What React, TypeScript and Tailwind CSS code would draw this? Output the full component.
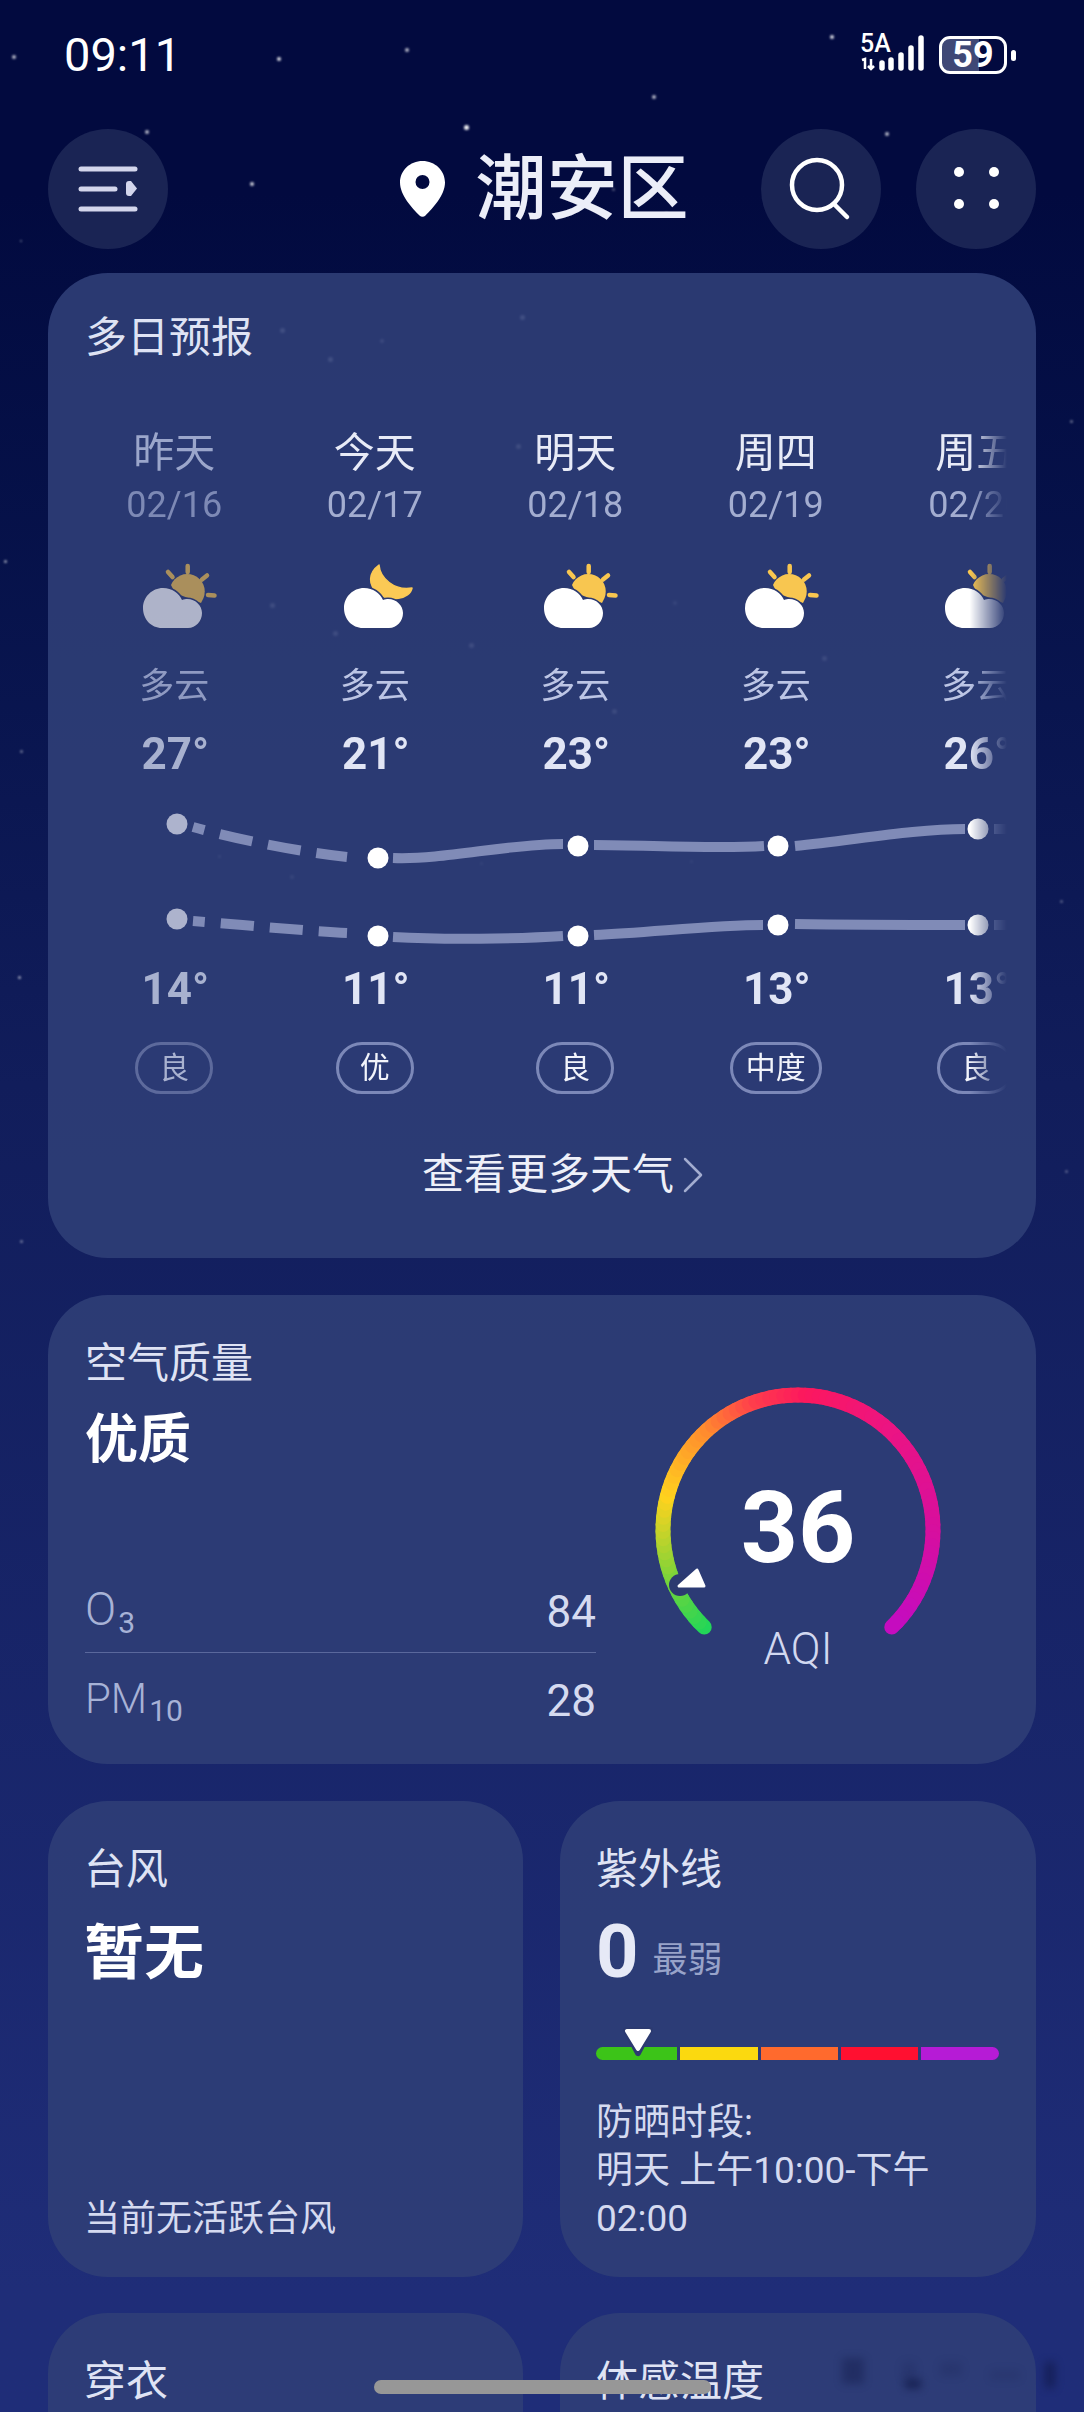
import React from "react";

const FONT = "font-['Roboto','Noto_Sans_CJK_SC',sans-serif]";
const CARD = "bg-[#2f3e77]/[0.9] rounded-[60px]";

const days = [
  { d: "昨天", date: "02/16", icon: "sun", w: "多云", hi: "27", lo: "14", aq: "良", dim: true },
  { d: "今天", date: "02/17", icon: "moon", w: "多云", hi: "21", lo: "11", aq: "优", dim: false },
  { d: "明天", date: "02/18", icon: "sun", w: "多云", hi: "23", lo: "11", aq: "良", dim: false },
  { d: "周四", date: "02/19", icon: "sun", w: "多云", hi: "23", lo: "13", aq: "中度", dim: false },
  { d: "周五", date: "02/20", icon: "sun", w: "多云", hi: "26", lo: "13", aq: "良", dim: false },
];

const stars: [number, number, number, number][] = [
  [12, 55, 4, 0.7], [277, 57, 4, 0.85], [405, 48, 3.5, 0.7], [830, 35, 4, 0.85], [652, 95, 3.5, 0.7],
  [145, 130, 4, 0.7], [464, 125, 4.5, 0.95], [885, 132, 3.5, 0.7], [970, 148, 4, 0.6], [250, 182, 4, 0.8],
  [665, 212, 3, 0.4], [612, 188, 2.5, 0.3], [880, 60, 2, 0.3], [20, 240, 2, 0.4],
  [280, 328, 5, 0.9], [380, 339, 4, 0.7], [328, 357, 5, 0.9], [520, 315, 5, 0.9], [516, 444, 5, 0.8],
  [270, 603, 5, 0.8], [333, 631, 5, 0.8], [469, 643, 5, 0.8], [673, 601, 4, 0.5], [822, 656, 5, 0.7],
  [612, 709, 5, 0.7], [218, 855, 3, 0.5], [290, 875, 4, 0.5], [480, 862, 3, 0.4], [690, 860, 3, 0.4],
  [4, 560, 3, 0.6], [18, 976, 3, 0.6], [20, 750, 2.5, 0.4], [1070, 420, 2.5, 0.4], [1060, 900, 2.5, 0.3],
  [20, 1240, 2.5, 0.4], [1065, 1170, 2.5, 0.3],
];

const smudges: [number, number, number, number, number][] = [
  [842, 2358, 22, 26, 0.35], [902, 2362, 14, 18, 0.15], [905, 2380, 16, 8, 0.75], [940, 2362, 22, 14, 0.15],
  [990, 2370, 30, 10, 0.12], [1045, 2362, 10, 26, 0.55],
];

function WeatherIcon({ kind, dim }: { kind: string; dim: boolean }) {
  return (
    <svg width="80" height="70" viewBox="0 0 80 70" className={dim ? "opacity-[0.62]" : ""}>
      {kind === "sun" ? (
        <g>
          <path d="M28 22 A17 17 0 0 1 60.5 35 L58 40 L32 30 Z" fill="#f8c650" />
          <g stroke="#f8c650" strokeWidth="4.5" strokeLinecap="round" fill="none">
            <path d="M44.7 3 L44.7 9" />
            <path d="M25 9 L29.5 14" />
            <path d="M64 12.5 L59 16.5" />
            <path d="M65 32 L71.5 32.5" />
          </g>
        </g>
      ) : (
        <path d="M35 2 C36 15 50 28 68 25 C66 36 45 40 34 30 C24 22 24 10 35 2 Z" fill="#fbc955" stroke="#fbc955" strokeWidth="1.5" strokeLinejoin="round" />
      )}
      <path
        d="M19 65 C8 65 0 56 0 45 C0 34 9 25 20 25 C29 25 36 30 39 37 C41 36 43 36 44 36 C53 36 59 43 59 50 C59 58 53 65 45 65 Z"
        fill="#ffffff"
        stroke="#2c3a70"
        strokeWidth="3"
        paintOrder="stroke"
      />
    </svg>
  );
}

function TempChart() {
  const hi: [number, number][] = [[102, 28], [303, 62], [503, 50], [703, 50], [903, 33]];
  const lo: [number, number][] = [[102, 123], [303, 140], [503, 140], [703, 129], [903, 129]];
  return (
    <svg width="932" height="160" viewBox="0 0 932 160" className="block">
      <g fill="none" stroke="#808bb7" strokeWidth="10">
        <path d="M118 31 C160 43 225 56 272 61" strokeDasharray="12 16 33 16 33 16 33" />
        <path d="M318 62 C370 64 430 48 488 48" />
        <path d="M519 49 C570 49 640 53 689 50" />
        <path d="M720 50 C780 44 840 33 890 33" />
        <path d="M919 33 L932 33" />
        <path d="M118 125 C170 129 230 135 272 137" strokeDasharray="12 16 33 16 33 16 33" />
        <path d="M318 141 C370 144 440 143 488 140" />
        <path d="M519 139 C580 136 640 129 688 129" />
        <path d="M720 128 C780 129 840 129 890 129" />
        <path d="M919 129 L932 129" />
      </g>
      {[...hi, ...lo].map(([x, y], i) => (
        <circle key={i} cx={x} cy={y} r="10.5" fill={i % 5 === 0 ? "#adb3cd" : "#ffffff"} />
      ))}
    </svg>
  );
}

const gaugeStops: [number, [number, number, number]][] = [
  [0, [30, 214, 90]],
  [0.09, [110, 212, 60]],
  [0.23, [255, 210, 30]],
  [0.35, [255, 140, 46]],
  [0.44, [255, 60, 76]],
  [0.52, [252, 24, 94]],
  [0.66, [236, 20, 130]],
  [0.83, [216, 15, 156]],
  [1, [196, 12, 192]],
];

function gaugeColor(t: number) {
  for (let i = 0; i < gaugeStops.length - 1; i++) {
    const [a, ca] = gaugeStops[i];
    const [b, cb] = gaugeStops[i + 1];
    if (t <= b) {
      const k = (t - a) / (b - a);
      return `rgb(${ca.map((c, j) => Math.round(c + (cb[j] - c) * k)).join(",")})`;
    }
  }
  return "rgb(196,12,192)";
}

function Gauge() {
  const cx = 150;
  const cy = 150;
  const r = 135;
  const n = 90;
  const pt = (t: number) => {
    const th = ((-136 + 272 * t) * Math.PI) / 180;
    return [cx + r * Math.sin(th), cy - r * Math.cos(th)];
  };
  return (
    <svg width="300" height="300" viewBox="0 0 300 300" className="block">
      <g fill="none" strokeWidth="15" strokeLinecap="round">
        {Array.from({ length: n }).map((_, i) => {
          const a = pt(i / n);
          const b = pt((i + 1) / n);
          return (
            <path key={i} d={`M${a[0]} ${a[1]} L${b[0]} ${b[1]}`} stroke={gaugeColor((i + 0.5) / n)} />
          );
        })}
      </g>
      <circle cx="32" cy="205" r="11" fill="#2c3a70" />
      <path d="M49 190 L31 206 L56 206 Z" fill="#ffffff" stroke="#ffffff" strokeWidth="3" strokeLinejoin="round" />
    </svg>
  );
}

function Sub({ children }: { children: React.ReactNode }) {
  return <span className="text-[30px] font-normal relative top-[8px] ml-[2px]">{children}</span>;
}

export default function App() {
  return (
    <div className={`${FONT} relative w-[1084px] h-[2412px] overflow-hidden bg-gradient-to-b from-[#020a3f] from-[8%] via-[#111d5b] via-[45%] to-[#1f2d78] to-[95%] text-white`}>
      {/* stars */}
      {stars.map(([x, y, s, o], i) => (
        <div
          key={i}
          className="absolute rounded-full bg-white blur-[1px]"
          style={{ left: x, top: y, width: s, height: s, opacity: o }}
        />
      ))}

      <div className="relative flex flex-col px-[48px]">
        {/* status bar */}
        <div className="h-[110px] flex items-center justify-between pl-[16px] pr-[20px]">
          <span className="text-[47px] leading-[50px] text-white">09:11</span>
          <div className="flex items-center gap-[12px]">
            <div className="relative w-[70px] h-[40px]">
              <span className="absolute left-[3px] top-[-4px] text-[25px] leading-[26px] font-medium text-white">5A</span>
              <svg width="70" height="40" viewBox="0 0 70 40" className="block">
                <g stroke="#ffffff" fill="none" strokeWidth="2.5">
                  <path d="M5 25 L8 24 L8 34" />
                  <path d="M14 24 L14 33 M11 31 L14 34 L17 31" />
                </g>
                <g stroke="#ffffff" strokeWidth="5.5" strokeLinecap="round">
                  <path d="M25 28 L25 33" />
                  <path d="M34 25 L34 33" />
                  <path d="M44 20 L44 33" />
                  <path d="M54 13 L54 33" />
                  <path d="M64 3 L64 33" />
                </g>
              </svg>
            </div>
            <div className="flex items-center gap-[4px]">
              <div className="w-[68px] h-[38px] rounded-[11px] border-[3px] border-white bg-[linear-gradient(to_right,#3f4876_60%,transparent_60%)] flex items-center justify-center text-[36px] leading-[32px] font-bold text-white">
                59
              </div>
              <div className="w-[5px] h-[11px] rounded-full bg-white" />
            </div>
          </div>
        </div>

        {/* header */}
        <div className="mt-[19px] h-[120px] flex items-center">
          <button className="w-[120px] h-[120px] shrink-0 rounded-full bg-[#1a2454]">
            <svg width="120" height="120" viewBox="0 0 120 120" className="block">
              <g stroke="#d3d6ec" strokeWidth="5" strokeLinecap="round">
                <path d="M33 40 L87 40" />
                <path d="M33 60 L67 60" />
                <path d="M33 80 L87 80" />
              </g>
              <path d="M78 55 Q78 52 81 52 L83 52 L89 59.5 L83 67 L81 67 Q78 67 78 64 Z" fill="#d3d6ec" />
            </svg>
          </button>
          <div className="flex-1 flex items-center justify-center pl-[160px] gap-[30px]">
            <svg width="45" height="56" viewBox="0 0 45 56" className="shrink-0">
              <path
                d="M22.5 0 C35 0 45 9.5 45 21.5 C45 34 33 47 25.5 54.5 C23.7 56.2 21.3 56.2 19.5 54.5 C12 47 0 34 0 21.5 C0 9.5 10 0 22.5 0 Z M22.5 14 A7 7 0 1 0 22.5 28 A7 7 0 1 0 22.5 14 Z"
                fill="#ffffff"
                fillRule="evenodd"
              />
            </svg>
            <span className="text-[71px] leading-[84px] font-medium text-[#eceef8]">潮安区</span>
          </div>
          <button className="w-[120px] h-[120px] shrink-0 rounded-full bg-[#1a2454]">
            <svg width="120" height="120" viewBox="0 0 120 120" className="block">
              <g fill="none" stroke="#ffffff" strokeWidth="4.5" strokeLinecap="round">
                <circle cx="56" cy="56" r="25" />
                <path d="M73 75 L86 88" />
              </g>
            </svg>
          </button>
          <button className="ml-[35px] w-[120px] h-[120px] shrink-0 rounded-full bg-[#1a2454]">
            <svg width="120" height="120" viewBox="0 0 120 120" className="block">
              <g fill="#ffffff">
                <circle cx="43" cy="43" r="5" />
                <circle cx="78" cy="43" r="5" />
                <circle cx="43" cy="75" r="5" />
                <circle cx="78" cy="75" r="5" />
              </g>
            </svg>
          </button>
        </div>

        {/* forecast */}
        <section className={`${CARD} mt-[24px] h-[985px] pt-[41px]`}>
          <h2 className="pl-[37px] text-[42px] leading-[48px] font-normal text-[#dfe3f4]">多日预报</h2>
          <div className="ml-[27px] mt-[58px] pt-[11px] w-[932px] overflow-hidden [mask-image:linear-gradient(to_right,black_96%,transparent_100%)]">
            <div className="flex w-[1003px]">
              {days.map((x) => (
                <div key={x.date} className="w-[200.5px] shrink-0 flex flex-col items-center">
                  <div className={`h-[44px] text-[41px] leading-[44px] -translate-x-[1px] ${x.dim ? "text-[#9ba6cb]" : "text-[#e8ebf7]"}`}>{x.d}</div>
                  <div className={`mt-[10px] h-[40px] text-[36px] leading-[40px] -translate-x-[1px] ${x.dim ? "text-[#7d89b5]" : "text-[#a3add0]"}`}>{x.date}</div>
                  <div className="mt-[38px] h-[70px] w-[80px] translate-x-[8px]">
                    <WeatherIcon kind={x.icon} dim={x.dim} />
                  </div>
                  <div className={`mt-[34px] h-[40px] text-[35px] leading-[40px] -translate-x-[1px] ${x.dim ? "text-[#8f9ac2]" : "text-[#bcc5e5]"}`}>{x.w}</div>
                  <div className={`mt-[22px] h-[50px] text-[44px] leading-[50px] font-bold ${x.dim ? "text-[#a8b1cf]" : "text-[#e1e5f5]"}`}>{x.hi}°</div>
                </div>
              ))}
            </div>
            <div className="mt-[17px]">
              <TempChart />
            </div>
            <div className="flex w-[1003px] mt-[8px]">
              {days.map((x) => (
                <div key={x.date} className="w-[200.5px] shrink-0 flex flex-col items-center">
                  <div className={`h-[50px] text-[44px] leading-[50px] font-bold ${x.dim ? "text-[#a8b1cf]" : "text-[#e1e5f5]"}`}>{x.lo}°</div>
                  <div
                    className={`mt-[28px] h-[52px] min-w-[78px] px-[13px] rounded-full border-[3px] flex items-center justify-center text-[30px] leading-[36px] -translate-x-[1px] ${x.dim ? "border-[#5d6a9c] text-[#a9b2d0]" : "border-[#7c88b8] text-[#f2f4fb]"}`}
                  >
                    {x.aq}
                  </div>
                </div>
              ))}
            </div>
          </div>
          <div className="mt-[51px] h-[60px] flex items-center justify-center gap-[8px] pl-[42px]">
            <span className="text-[42px] leading-[60px] text-[#eef0f9]">查看更多天气</span>
            <svg width="22" height="36" viewBox="0 0 22 36" fill="none" stroke="#a3add0" strokeWidth="2.5" strokeLinecap="round" strokeLinejoin="round">
              <path d="M3 2 L19 18 L3 34" />
            </svg>
          </div>
        </section>

        {/* air quality */}
        <section className={`${CARD} mt-[37px] h-[469px] flex`}>
          <div className="ml-[37px] w-[511px] pt-[45px]">
            <h2 className="text-[42px] leading-[48px] font-normal text-[#dfe3f4]">空气质量</h2>
            <div className="mt-[22px] h-[60px] text-[53px] leading-[60px] font-bold text-white">优质</div>
            <div className="mt-[101px] h-[82px] flex items-center justify-between border-b border-[#5a689c]">
              <span className="text-[46px] leading-[50px] font-light text-[#a7b2d6]">
                O<Sub>3</Sub>
              </span>
              <span className="text-[44px] leading-[50px] text-[#d5daf0]">84</span>
            </div>
            <div className="h-[96px] flex items-center justify-between">
              <span className="text-[42px] leading-[50px] font-light text-[#a7b2d6]">
                PM<Sub>10</Sub>
              </span>
              <span className="text-[44px] leading-[50px] text-[#d5daf0]">28</span>
            </div>
          </div>
          <div className="relative ml-[52px] mt-[85px] w-[300px] h-[300px]">
            <Gauge />
            <div className="absolute left-0 right-0 top-[88px] h-[120px] text-center text-[100px] leading-[120px] font-bold text-white">36</div>
            <div className="absolute left-0 right-0 top-[244px] h-[50px] text-center text-[44px] leading-[50px] font-light text-[#d2d8f0]">AQI</div>
          </div>
        </section>

        {/* typhoon + uv */}
        <div className="mt-[37px] flex gap-[37px]">
          <section className={`${CARD} w-[475px] h-[476px] flex flex-col pt-[45px] pl-[36px] pb-[34px]`}>
            <h2 className="text-[42px] leading-[48px] font-normal text-[#dfe3f4]">台风</h2>
            <div className="mt-[25px] h-[70px] text-[60px] leading-[70px] font-bold text-white">暂无</div>
            <div className="mt-auto text-[36px] leading-[48px] text-[#d5daf0]">当前无活跃台风</div>
          </section>
          <section className={`${CARD} w-[476px] h-[476px] flex flex-col pt-[45px] pl-[36px] pr-[36px]`}>
            <h2 className="text-[42px] leading-[48px] font-normal text-[#dfe3f4]">紫外线</h2>
            <div className="mt-[18px] h-[80px] flex items-baseline gap-[14px]">
              <span className="text-[74px] leading-[80px] font-bold text-[#e6e9f6]">0</span>
              <span className="text-[35px] leading-[40px] text-[#98a3c9] -translate-y-[5px]">最弱</span>
            </div>
            <div className="relative mt-[55px] h-[13px] flex gap-[3px]">
              <div className="w-[81px] bg-[#3cc418] rounded-l-full" />
              <div className="w-[78px] bg-[#fbd90f]" />
              <div className="w-[77px] bg-[#ff6a2d]" />
              <div className="w-[77px] bg-[#ff1030]" />
              <div className="w-[78px] bg-[#b61bd6] rounded-r-full" />
              <svg width="36" height="32" viewBox="0 0 36 32" className="absolute left-[24px] top-[-22px]">
                <path d="M6 5 L30 5 L18 28 Z" fill="#2c3a70" stroke="#2c3a70" strokeWidth="6" strokeLinejoin="round" />
                <path d="M7 6 L29 6 L18 24 Z" fill="#ffffff" stroke="#ffffff" strokeWidth="4" strokeLinejoin="round" />
              </svg>
            </div>
            <p className="mt-[39px] text-[37px] leading-[48px] text-[#d5daf0]">
              防晒时段:
              <br />
              明天 上午10:00-下午 02:00
            </p>
          </section>
        </div>

        {/* next row */}
        <div className="mt-[36px] flex gap-[37px]">
          <section className={`${CARD} w-[475px] h-[476px] pt-[45px] pl-[36px]`}>
            <h2 className="text-[42px] leading-[48px] font-normal text-[#dfe3f4]">穿衣</h2>
          </section>
          <section className={`${CARD} w-[476px] h-[476px] pt-[45px] pl-[36px]`}>
            <h2 className="text-[42px] leading-[48px] font-normal text-[#dfe3f4]">体感温度</h2>
          </section>
        </div>
      </div>

      {/* watermark smudge */}
      {smudges.map(([x, y, w, h, o], i) => (
        <div
          key={i}
          className="absolute bg-[#0d1440] blur-[4px]"
          style={{ left: x, top: y, width: w, height: h, opacity: o }}
        />
      ))}

      {/* home indicator */}
      <div className="absolute left-[374px] top-[2380px] w-[337px] h-[14px] rounded-full bg-[#979797]" />
    </div>
  );
}
